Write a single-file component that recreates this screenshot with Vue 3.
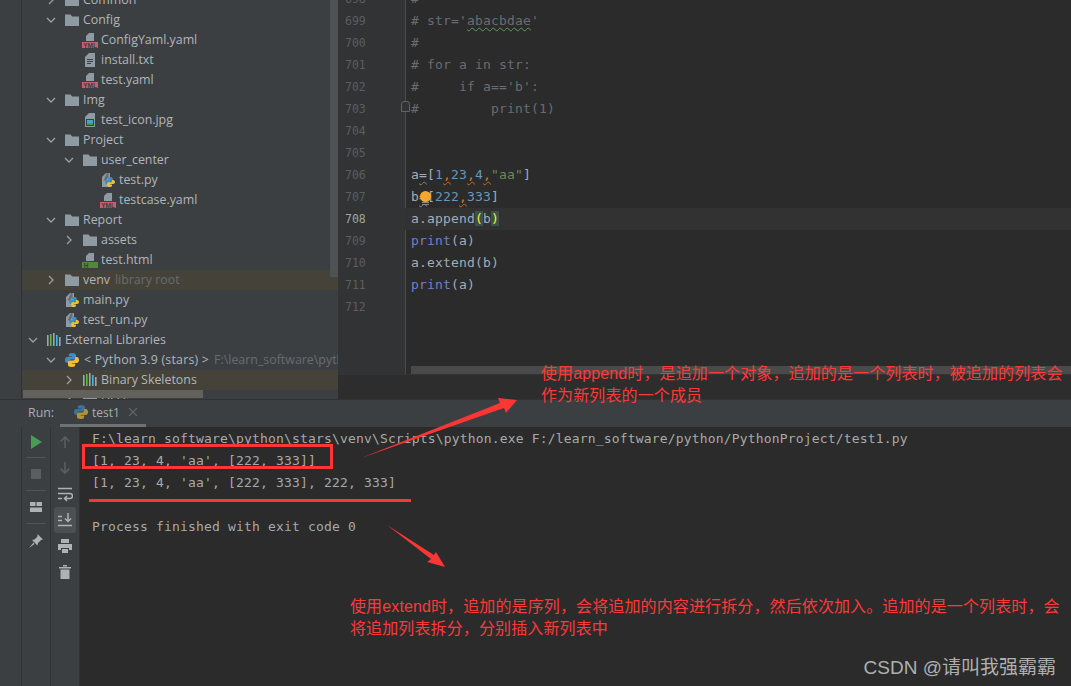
<script setup>
const tree = [
  { l: 1, a: 'r', i: 'folder', t: 'Common' },
  { l: 1, a: 'd', i: 'folder', t: 'Config' },
  { l: 2, i: 'yml', t: 'ConfigYaml.yaml' },
  { l: 2, i: 'txt', t: 'install.txt' },
  { l: 2, i: 'yml', t: 'test.yaml' },
  { l: 1, a: 'd', i: 'folder', t: 'Img' },
  { l: 2, i: 'jpg', t: 'test_icon.jpg' },
  { l: 1, a: 'd', i: 'folder', t: 'Project' },
  { l: 2, a: 'd', i: 'folder', t: 'user_center' },
  { l: 3, i: 'pyfile', t: 'test.py' },
  { l: 3, i: 'yml', t: 'testcase.yaml' },
  { l: 1, a: 'd', i: 'folder', t: 'Report' },
  { l: 2, a: 'r', i: 'folder', t: 'assets' },
  { l: 2, i: 'html', t: 'test.html' },
  { l: 1, a: 'r', i: 'folder', t: 'venv', hint: 'library root', hl: true },
  { l: 1, i: 'pyfile', t: 'main.py' },
  { l: 1, i: 'pyfile', t: 'test_run.py' },
  { l: 0, a: 'd', i: 'libs', t: 'External Libraries' },
  { l: 1, a: 'd', i: 'python', t: '< Python 3.9 (stars) >', hint: 'F:\\learn_software\\python\\stars\\venv' },
  { l: 2, a: 'r', i: 'libs', t: 'Binary Skeletons', hl: true },
  { l: 2, a: 'r', i: 'folder', t: 'DLLs' }
]
const c = 'cm', n = 'nm', s = 'st', p = 'pl', k = 'kw', o = 'cw', w = 'gw'
const lines = [
  { n: 698, parts: [[c, '#']] },
  { n: 699, parts: [[c, "# str='"], [w, 'abacbdae'], [c, "'"]] },
  { n: 700, parts: [[c, '#']] },
  { n: 701, parts: [[c, '# for a in str:']] },
  { n: 702, parts: [[c, "#     if a=='b':"]] },
  { n: 703, parts: [[c, '#         print(1)']], fold: true },
  { n: 704, parts: [] },
  { n: 705, parts: [] },
  { n: 706, parts: [[p, 'a'], ['ow', '='], [p, '['], [n, '1'], [o, ','], [n, '23'], [o, ','], [n, '4'], [o, ','], [s, '"aa"'], [p, ']']] },
  { n: 707, parts: [[p, 'b'], ['ow', '='], [p, '['], [n, '222'], [o, ','], [n, '333'], [p, ']']], bulb: true },
  { n: 708, parts: [[p, 'a.append'], ['br', '('], [p, 'b'], ['br', ')']], cur: true },
  { n: 709, parts: [[k, 'print'], [p, '(a)']] },
  { n: 710, parts: [[p, 'a.extend(b)']] },
  { n: 711, parts: [[k, 'print'], [p, '(a)']] },
  { n: 712, parts: [] }
]
const output = [
  'F:\\learn_software\\python\\stars\\venv\\Scripts\\python.exe F:/learn_software/python/PythonProject/test1.py',
  "[1, 23, 4, 'aa', [222, 333]]",
  "[1, 23, 4, 'aa', [222, 333], 222, 333]",
  '',
  'Process finished with exit code 0'
]
</script>

<template>
  <div class="ide">
    <svg class="defs" width="0" height="0">
      <symbol id="folder" viewBox="0 0 16 16"><path d="M1 2.500h5.500l1.600 2H15v9.500H1z" fill="#8f9ba3"/></symbol>
      <symbol id="python" viewBox="0 0 16 16">
        <path d="M8 1C5.500 1 4.800 2 4.800 3v1.500h3.400V5H3.200C2 5 1 6.200 1 8s1 3 2.200 3h1.600V9.500c0-1.200 1-2 2-2h3.400c1 0 1.800-.8 1.800-1.800V3c0-1-1-2-4-2z" fill="#3b8ec8"/>
        <path d="M8 1C5.500 1 4.800 2 4.800 3v1.500h3.400V5H3.200C2 5 1 6.200 1 8s1 3 2.200 3h1.600V9.500c0-1.200 1-2 2-2h3.400c1 0 1.800-.8 1.800-1.800V3c0-1-1-2-4-2z" fill="#f0bf3a" transform="rotate(180 8 8)"/>
      </symbol>
      <symbol id="libs" viewBox="0 0 16 16">
        <rect x="1" y="3" width="1.600" height="11" fill="#9aa7b0"/><rect x="4" y="2" width="1.600" height="12" fill="#62b543"/>
        <rect x="7" y="1" width="1.600" height="13" fill="#9aa7b0"/><rect x="10" y="3" width="1.600" height="11" fill="#40b6e0"/>
        <rect x="13" y="5" width="1.600" height="9" fill="#9aa7b0"/>
      </symbol>
      <symbol id="txt" viewBox="0 0 16 16">
        <path d="M3 5l4-4h6v14H3z" fill="#8f9ba3"/><path d="M5 7.500h6M5 9.500h6M5 11.500h4" stroke="#3c3f41"/>
      </symbol>
      <symbol id="jpg" viewBox="0 0 16 16">
        <path d="M3 5l4-4h6v14H3z" fill="#8f9ba3"/><rect x="4" y="7" width="8" height="7" fill="#3c3f41"/>
        <rect x="5" y="8" width="6" height="3" fill="#40a8c8"/><rect x="5" y="11" width="6" height="2" fill="#4c9a4a"/>
      </symbol>
      <symbol id="pyfile" viewBox="0 0 16 16">
        <path d="M2 5l4-4h4v14H2z" fill="#8f9ba3"/>
        <path d="M3.500 8.500h3l1-3 1 .5V1H7z" fill="#3c3f41" opacity=".5"/>
        <path d="M10 5C8.500 5 8 5.700 8 6.500v1h2.200v.5H6.800C6 8 5 8.800 5 10s1 2 1.800 2H8v-1c0-.8.700-1.300 1.300-1.300h2.200c.7 0 1.200-.5 1.200-1.200V6.500C12.700 5.700 12 5 10 5z" fill="#3b8ec8"/>
        <path d="M10 15c1.500 0 2-.7 2-1.500v-1H9.800V12h3.400c.8 0 1.800-.8 1.800-2s-1-2-1.800-2H12v1c0 .8-.7 1.300-1.300 1.300H8.500c-.7 0-1.200.5-1.200 1.200v2c0 .8.700 1.500 2.700 1.500z" fill="#f0bf3a"/>
      </symbol>
    </svg>

    <div class="top">
      <div class="strip"></div>
      <div class="tree">
        <div class="tree-list">
          <div v-for="r in tree" :key="r.t" class="row" :class="[`lv${r.l}`, { hl: r.hl }]">
            <span class="chev">
              <svg v-if="r.a === 'd'" width="10" height="10" viewBox="0 0 10 10"><path d="M1 3l4 4 4-4" fill="none" stroke="#9da0a2" stroke-width="1.300"/></svg>
              <svg v-else-if="r.a === 'r'" width="10" height="10" viewBox="0 0 10 10"><path d="M3 1l4 4-4 4" fill="none" stroke="#9da0a2" stroke-width="1.300"/></svg>
            </span>
            <svg v-if="r.i === 'yml' || r.i === 'html'" class="ic" viewBox="0 0 16 16">
              <path d="M4 9V4l3-3h5v8z" fill="#8f9ba3"/>
              <rect y="10" width="16" height="6" :fill="r.i === 'yml' ? '#c4606f' : '#4f8a38'"/>
              <text v-if="r.i === 'yml'" x="8" y="15.500" class="band">YML</text>
              <text v-else x="4" y="15.500" class="band">H</text>
            </svg>
            <svg v-else class="ic"><use :href="`#${r.i}`"/></svg>
            <span class="name" :class="{ py: r.i === 'python' }">{{ r.t }}</span>
            <span v-if="r.hint" class="hint">{{ r.hint }}</span>
          </div>
        </div>
        <div class="vbar"></div>
        <div class="hbar"></div>
      </div>

      <div class="editor">
        <div class="lines">
          <div v-for="l in lines" :key="l.n" class="line" :class="{ cur: l.cur }">
            <span class="num">{{ l.n }}</span>
            <span class="code">
              <span v-for="(t, i) in l.parts" :key="i" :class="t[0]">{{ t[1] }}</span>
              <span v-if="l.bulb" class="bulb"></span>
              <span v-if="l.fold" class="fold"></span>
            </span>
          </div>
          <div class="ehbar"></div>
        </div>
        <div class="crumbs"></div>
      </div>
    </div>

    <div class="tabs">
      <span class="run">Run:</span>
      <div class="tab">
        <svg class="ic dim"><use href="#python"/></svg>
        <span class="tabname">test1</span>
        <svg class="close" width="10" height="10" viewBox="0 0 10 10"><path d="M1 1l8 8M9 1l-8 8" stroke="#5f6365" stroke-width="1.200"/></svg>
      </div>
    </div>

    <div class="bottom">
      <div class="strip"></div>
      <div class="col1">
        <div class="b1"><svg width="14" height="14" viewBox="0 0 14 14"><path d="M2 0l11 7-11 7z" fill="#499c54"/></svg></div>
        <div class="b1"><svg width="12" height="12" viewBox="0 0 12 12"><rect x="1" y="1" width="10" height="10" fill="#5b5e60"/></svg></div>
        <div class="b1"><svg width="14" height="14" viewBox="0 0 14 14"><path d="M1 2h5.500v4H1zM7.500 2H13v4H7.500zM1 7.500h12V12H1z" fill="#afb1b3"/></svg></div>
        <div class="b1 last"><svg width="16" height="16" viewBox="0 0 16 16"><path d="M9.500 1L15 6.500l-2 .5-3 3-.5 2.500L4 7l2.500-.5 3-3zM5.500 9.500L1 15l5.500-4z" fill="#afb1b3"/></svg></div>
      </div>
      <div class="col2">
        <div class="b2"><svg width="14" height="14" viewBox="0 0 14 14"><path d="M7 13V2M2.500 6.500L7 2l4.500 4.500" fill="none" stroke="#5b5e60" stroke-width="1.600"/></svg></div>
        <div class="b2"><svg width="14" height="14" viewBox="0 0 14 14"><path d="M7 1v11M2.500 7.500L7 12l4.500-4.500" fill="none" stroke="#5b5e60" stroke-width="1.600"/></svg></div>
        <div class="b2"><svg width="16" height="16" viewBox="0 0 16 16"><path d="M1 2.500h14M1 7.500h12a2.500 2.500 0 0 1 0 5H8M1 12.500h4M10 10l-2.500 2.500L10 15" fill="none" stroke="#afb1b3" stroke-width="1.500"/></svg></div>
        <div class="b2 on"><svg width="16" height="16" viewBox="0 0 16 16"><path d="M1 13.500h14M1 4.500h4M1 8.500h4M11 1v8M8 6.500l3 3 3-3" fill="none" stroke="#afb1b3" stroke-width="1.500"/></svg></div>
        <div class="b2"><svg width="16" height="16" viewBox="0 0 16 16"><path d="M4 1h8v4H4zM1 6h14v6h-3v-2H4v2H1zM5 11h6v4H5z" fill="#afb1b3"/></svg></div>
        <div class="b2"><svg width="14" height="16" viewBox="0 0 14 16"><path d="M1 3h12v1.500H1zM5 1h4v1.500H5zM2.500 5.500h9V15h-9z" fill="#afb1b3"/></svg></div>
      </div>
      <div class="console">
        <div v-for="(o2, i) in output" :key="i" class="out">{{ o2 }}</div>
      </div>
    </div>

    <svg class="marks" width="1071" height="686" viewBox="0 0 1071 686">
      <rect x="83.500" y="445.500" width="248" height="22" fill="none" stroke="#fc3535" stroke-width="3"/>
      <rect x="89" y="499" width="322" height="3" fill="#fc3535"/>
      <path d="M361 458L500 403 498 398 517 400 506 413 504 408z" fill="#fc3535"/>
      <path d="M387 525L434 555 436 552 445 567 427 562 431 559z" fill="#fc3535"/>
    </svg>
    <div class="note n1">
      <div>使用append时，是追加一个对象，追加的是一个列表时，被追加的列表会</div>
      <div>作为新列表的一个成员</div>
    </div>
    <div class="note n2">
      <div>使用extend时，追加的是序列，会将追加的内容进行拆分，然后依次加入。追加的是一个列表时，会</div>
      <div>将追加列表拆分，分别插入新列表中</div>
    </div>
    <div class="mark">CSDN @请叫我强霸霸</div>
  </div>
</template>

<style scoped>
.ide { position: relative; width: 1071px; height: 686px; display: flex; flex-direction: column; overflow: hidden; background: #2b2b2b; font-family: "Open Sans", "Noto Sans CJK SC", sans-serif; }
.defs { position: absolute; }
.top { height: 399px; display: flex; flex: none; }
.strip { width: 22px; flex: none; background: #3c3f41; border-right: 1px solid #323232; box-sizing: border-box; }
.tree { position: relative; width: 316px; flex: none; background: #3c3f41; overflow: hidden; }
.tree-list { margin-top: -10px; }
.row { height: 20px; display: flex; align-items: center; white-space: nowrap; font-size: 12.400px; color: #b0b6ba; }
.row.hl { background: #45423a; }
.lv0 { padding-left: 3px; }
.lv1 { padding-left: 21px; }
.lv2 { padding-left: 39px; }
.lv3 { padding-left: 57px; }
.chev { width: 16px; height: 16px; margin-right: 5px; flex: none; display: flex; align-items: center; justify-content: center; }
.ic { width: 16px; height: 16px; flex: none; margin-right: 3px; }
.band { font: 700 6.500px "Liberation Sans", sans-serif; fill: #3c3f41; text-anchor: middle; }
.name { flex: none; margin-top: -2px; }
.name.py { margin-left: 1px; letter-spacing: .2px; }
.hint { margin-left: 5px; margin-top: -2px; color: #686c6f; }
.vbar { position: absolute; top: 0; right: 0; width: 8px; height: 277px; background: #4e5254; }
.hbar { position: absolute; left: 1px; top: 390px; width: 180px; height: 8px; background: #62615b; }
.editor { flex: 1; display: flex; flex-direction: column; min-width: 0; }
.lines { position: relative; flex: 1; overflow: hidden; background: linear-gradient(to right, #313335 67px, #4a4c4e 67px 68px, #2b2b2b 68px); }
.line { display: flex; height: 22px; white-space: pre; font: 13px/22px "DejaVu Sans Mono", monospace; letter-spacing: .17px; }
.line:first-child { margin-top: -12px; }
.line.cur { background: linear-gradient(to right, #313335 68px, #323232 68px); }
.num { width: 68px; flex: none; box-sizing: border-box; padding-left: 7px; font-size: 11.500px; letter-spacing: 0; color: #5a5e61; }
.cur .num { color: #a4a3a3; }
.code { position: relative; padding-left: 5px; }
.cm { color: #686d71; }
.pl { color: #a0adb9; }
.nm { color: #6897bb; }
.st { color: #6a8759; }
.kw { color: #7280c4; }
.cw { color: #cc7832; text-decoration: underline wavy #c8672f 1px; text-underline-offset: 2px; }
.ow { color: #a0adb9; text-decoration: underline wavy #7d8a6a 1px; text-underline-offset: 2px; }
.gw { color: #686d71; text-decoration: underline wavy #5e9a5e 1px; text-underline-offset: 2px; }
.br { color: #ffef28; background: #3b514d; }
.bulb { position: absolute; left: 14px; top: 5px; width: 11px; height: 11px; border-radius: 50%; background: #f2a72e; }
.bulb::after { content: ""; position: absolute; left: 2px; top: 11px; width: 7px; height: 3px; border-top: 1px solid #8a8d8f; border-bottom: 1px solid #8a8d8f; box-sizing: border-box; }
.fold { position: absolute; left: -5px; top: 3px; width: 7px; height: 9px; border: 1px solid #606366; border-radius: 3px 3px 0 0; background: #313335; }
.ehbar { position: absolute; left: 73px; right: 0; top: 366px; height: 8px; background: #4a4a4a; }
.crumbs { height: 24px; flex: none; background: #2d2d2d; border-top: 1px solid #343434; }
.tabs { height: 28px; flex: none; display: flex; background: #3c3f41; border-top: 1px solid #323232; box-sizing: border-box; }
.run { width: 60px; padding-left: 28px; box-sizing: border-box; font-size: 12.400px; line-height: 26px; color: #a8adb0; }
.tab { width: 86px; display: flex; align-items: center; box-sizing: border-box; padding-left: 13px; height: 27px; border-bottom: 3px solid #6e7275; font-size: 12px; color: #a8adb0; }
.tab .ic { margin-right: 3px; }
.dim { opacity: .65; }
.close { margin-left: 8px; }
.bottom { flex: 1; display: flex; min-height: 0; }
.col1 { width: 29px; flex: none; background: #3c3f41; border-right: 1px solid #323232; display: flex; flex-direction: column; align-items: center; box-sizing: border-box; }
.b1 { width: 20px; height: 33px; display: flex; align-items: center; justify-content: center; border-bottom: 1px solid #515456; box-sizing: border-box; }
.b1:first-child { height: 31px; }
.b1.last { border-bottom: 0; }
.col2 { width: 29px; flex: none; background: #3c3f41; border-right: 1px solid #323232; display: flex; flex-direction: column; align-items: center; box-sizing: border-box; padding-top: 2px; }
.b2 { width: 22px; height: 26px; display: flex; align-items: center; justify-content: center; }
.b2.on { background: #4c5052; border-radius: 3px; }
.console { flex: 1; padding-left: 12px; min-width: 0; padding-top: 1px; }
.out { height: 22px; font: 13px/22px "DejaVu Sans Mono", monospace; letter-spacing: .17px; color: #a9a9a9; white-space: pre; }
.marks { position: absolute; left: 0; top: 0; pointer-events: none; }
.note { position: absolute; font: 16px/22px "Liberation Sans", "Noto Sans CJK SC", sans-serif; color: #fc3a3a; white-space: nowrap; letter-spacing: .12px; }
.n1 { left: 541px; top: 363px; }
.n2 { left: 350px; top: 596px; }
.mark { position: absolute; right: 15px; top: 656px; font: 19px/24px "Liberation Sans", "Noto Sans CJK SC", sans-serif; color: #b0b0b0; white-space: nowrap; }
</style>
